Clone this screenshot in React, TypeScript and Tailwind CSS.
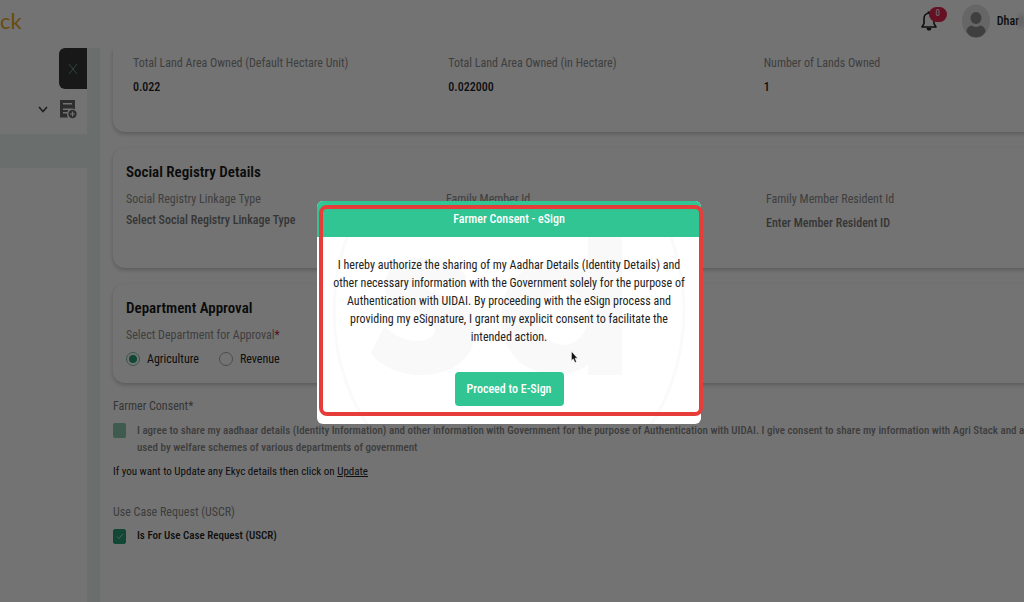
import { useState } from "react";

type FieldProps = {
  id: string;
  label: string;
  placeholder: string;
};

const landDetails = [
  { label: "Total Land Area Owned (Default Hectare Unit)", value: "0.022" },
  { label: "Total Land Area Owned (in Hectare)", value: "0.022000" },
  { label: "Number of Lands Owned", value: "1" },
];

const Header = () => (
  <header className="flex h-12 shrink-0 items-center justify-between bg-white">
    <span className="pb-2 font-[Lato,sans-serif] text-[22px] text-[#e8a81c]">
      ck
    </span>
    <div className="flex items-center pb-[7px]">
      <button
        type="button"
        aria-label="Notifications"
        className="relative mr-6 text-[#222]"
      >
        <svg width="18" height="22" viewBox="0 0 18 22" fill="none">
          <path
            d="M9 3.2C5.8 3.2 4 5.6 4 8.6V13.6L2 17H16L14 13.6V8.6C14 5.6 12.2 3.2 9 3.2Z"
            stroke="currentColor"
            strokeWidth="1.6"
            strokeLinejoin="round"
          />
          <path d="M7.6 3V1.4H10.4V3Z" fill="currentColor" />
          <path d="M6.6 18H11.4C11.4 19.6 10.4 20.6 9 20.6S6.6 19.6 6.6 18Z" fill="currentColor" />
        </svg>
        <span className="absolute -top-[3px] left-[9px] flex h-[15px] w-[18px] items-center justify-center rounded-full bg-[#e0264f] text-[9px] text-white">
          0
        </span>
      </button>
      <svg width="28" height="34" viewBox="0 0 28 34" className="mr-[7px]">
        <ellipse cx="14" cy="17" rx="14" ry="16.5" fill="#e2e2e2" />
        <ellipse cx="14" cy="14" rx="5.5" ry="6" fill="#8c8c8c" />
        <path
          d="M4.5 27.5C4.5 24 7.5 22 9.5 21.6C12 23.4 16 23.4 18.5 21.6C20.5 22 23.5 24 23.5 27.5C21.5 32 17.5 33.4 14 33.4S6.5 32 4.5 27.5Z"
          fill="#8c8c8c"
        />
      </svg>
      <span className="text-xs font-medium text-[#1a1a1a]">Dhar</span>
      <span className="h-3 w-[5px] bg-[#d4d4d4] blur-[2px]" />
    </div>
  </header>
);

const Sidebar = () => (
  <aside className="flex w-[87px] shrink-0 flex-col">
    <div className="h-[86px] bg-white">
      <button
        type="button"
        aria-label="Close menu"
        className="ml-auto flex h-[41px] w-7 items-center justify-center rounded-l-md bg-[#363636] text-[#5f9f8e]"
      >
        <svg width="10" height="12" viewBox="0 0 10 12" stroke="currentColor">
          <path d="M1 1L9 11M9 1L1 11" />
        </svg>
      </button>
      <div className="mt-[10px] flex items-center justify-end gap-[11px] pr-[10px] text-[#444]">
        <svg width="10" height="7" viewBox="0 0 10 7" fill="none">
          <path d="M1 1L5 5.5L9 1" stroke="currentColor" strokeWidth="1.6" />
        </svg>
        <svg width="18" height="20" viewBox="0 0 18 20" fill="#666">
          <path
            fillRule="evenodd"
            d="M1 1H16V10.2A5.5 5.5 0 0 0 13 9.4H4V11H9.5A5 5 0 0 0 8.4 13H4V14.6H8A6 6 0 0 0 9 18.5H1ZM4 4V5.6H13V4Z"
          />
          <path
            fillRule="evenodd"
            d="M13.5 10.8A4.2 4.2 0 1 1 13.5 19.2A4.2 4.2 0 1 1 13.5 10.8ZM12.9 12.6V14.4H11.1V15.6H12.9V17.4H14.1V15.6H15.9V14.4H14.1V12.6Z"
          />
        </svg>
      </div>
    </div>
    <div className="h-[34px] bg-[#ecf3f1]" />
    <div className="grow bg-white" />
  </aside>
);

const Field = ({ id, label, placeholder }: FieldProps) => (
  <div>
    <label htmlFor={id} className="block text-[#8c8c8c]">
      {label}
    </label>
    <input
      id={id}
      placeholder={placeholder}
      className="mt-2 block h-4 w-[220px] bg-transparent font-medium placeholder:text-[#777] placeholder:opacity-100 focus:outline-none"
    />
  </div>
);

const CheckMark = () => (
  <svg
    width="8"
    height="7"
    viewBox="0 0 8 7"
    fill="none"
    className="pointer-events-none col-start-1 row-start-1"
  >
    <path d="M1 3.5L3 5.5L7 1" stroke="#a5dcc8" />
  </svg>
);

const RegistrationForm = () => {
  const [department, setDepartment] = useState("Agriculture");
  const [useCase, setUseCase] = useState(true);

  return (
    <main className="min-w-0 grow overflow-hidden bg-white pl-[13px] text-xs leading-4">
      <div className="min-w-[986px]">
        {/* Land details */}
        <section className="grid h-[84px] grid-cols-3 rounded-b-xl px-5 pt-[7px] shadow-[0_2px_4px_rgba(0,0,0,0.22)]">
          {landDetails.map(({ label, value }) => (
            <div key={label}>
              <p className="text-[#8c8c8c]">{label}</p>
              <p className="mt-2 font-medium text-[#222]">{value}</p>
            </div>
          ))}
        </section>

        {/* Social registry */}
        <section className="mt-4 h-[120px] rounded-xl px-[13px] pt-[14px] shadow-[0_2px_4px_rgba(0,0,0,0.22)]">
          <h2 className="text-[15px] leading-5 font-semibold text-[#1a1a1a]">
            Social Registry Details
          </h2>
          <div className="mt-[9px] grid grid-cols-3">
            <div>
              <label htmlFor="linkage-type" className="block text-[#8c8c8c]">
                Social Registry Linkage Type
              </label>
              <select
                id="linkage-type"
                className="mt-[5px] block h-4 appearance-none bg-transparent font-medium text-[#777]"
              >
                <option>Select Social Registry Linkage Type</option>
              </select>
            </div>
            <Field id="member-id" label="Family Member Id" placeholder="" />
            <Field
              id="resident-id"
              label="Family Member Resident Id"
              placeholder="Enter Member Resident ID"
            />
          </div>
        </section>

        {/* Department approval */}
        <section className="mt-4 h-[99px] rounded-xl px-[13px] pt-[14px] shadow-[0_2px_4px_rgba(0,0,0,0.22)]">
          <h2 className="text-[15px] leading-5 font-semibold text-[#1a1a1a]">
            Department Approval
          </h2>
          <fieldset className="mt-[9px]">
            <legend className="text-[#8c8c8c]">
              Select Department for Approval
              <span className="text-[#c0203c]">*</span>
            </legend>
            <div className="mt-2 flex gap-5">
              {["Agriculture", "Revenue"].map((name) => (
                <label key={name} className="flex items-center gap-[7px] text-[#222]">
                  <input
                    type="radio"
                    name="department"
                    checked={department === name}
                    onChange={() => setDepartment(name)}
                    className="size-[14px] appearance-none rounded-full border border-[#aaa] bg-clip-content p-[2px] checked:border-[#7cc0a5] checked:bg-[#2a9d75]"
                  />
                  {name}
                </label>
              ))}
            </div>
          </fieldset>
        </section>

        {/* Consent */}
        <p className="mt-[15px] text-[#777]">Farmer Consent*</p>
        <label className="mt-2 flex gap-[11px] text-[11px] leading-[17px] font-medium text-[#888]">
          <input
            type="checkbox"
            disabled
            className="mt-[1px] h-[15px] w-[13px] shrink-0 appearance-none rounded-xs bg-[#8cc9b1]"
          />
          <span>
            I agree to share my aadhaar details (Identity Information) and other
            information with Government for the purpose of Authentication with
            UIDAI. I give consent to share my information with Agri Stack and a
            <br />
            used by welfare schemes of various departments of government
          </span>
        </label>
        <p className="mt-2 text-[11px] leading-4 text-[#222]">
          If you want to Update any Ekyc details then click on{" "}
          <a href="#update" className="underline">
            Update
          </a>
        </p>

        <p className="mt-6 text-[#888]">Use Case Request (USCR)</p>
        <label className="mt-2 flex items-center gap-[11px] pb-6 text-[11px] leading-4 font-medium text-[#222]">
          <span className="grid place-items-center">
            <input
              type="checkbox"
              checked={useCase}
              onChange={(e) => setUseCase(e.target.checked)}
              className="col-start-1 row-start-1 h-[15px] w-[13px] appearance-none rounded-xs border border-[#2a9d75] checked:bg-[#2a9d75]"
            />
            {useCase && <CheckMark />}
          </span>
          Is For Use Case Request (USCR)
        </label>
      </div>
    </main>
  );
};

const Watermark = () => (
  <svg
    viewBox="0 0 384 187"
    fill="none"
    aria-hidden="true"
    className="absolute inset-0 size-full"
  >
    <ellipse cx="192" cy="74" rx="175" ry="194" stroke="#fafafa" strokeWidth="3" />
    <path
      d="M150 40C130 14 72 14 68 46C66 84 118 66 118 92C116 112 76 104 68 88L54 116C78 150 158 146 158 94C156 48 110 66 110 48C116 38 130 44 138 54Z"
      fill="#f9f9f9"
    />
    <path
      fillRule="evenodd"
      d="M271 0H305V138H271V128C244 148 184 138 184 80C184 30 236 10 271 34ZM271 80A25 28 0 1 0 221 80A25 28 0 1 0 271 80Z"
      fill="#f9f9f9"
    />
  </svg>
);

const ConsentDialog = () => (
  <div className="fixed inset-0 flex items-center justify-center bg-black/55 pt-[23px] pr-[6px]">
    <div
      role="dialog"
      aria-labelledby="consent-title"
      className="relative w-96 rounded-md bg-white"
    >
      <h2
        id="consent-title"
        className="h-9 rounded-t-md bg-[#30c592] pt-[10px] text-center text-xs leading-4 font-medium text-white"
      >
        Farmer Consent - eSign
      </h2>
      <div className="relative px-4 pt-[19px] pb-[18px] text-center">
        <Watermark />
        <p className="relative text-xs leading-[18px] text-[#222]">
          I hereby authorize the sharing of my Aadhar Details (Identity Details)
          and other necessary information with the Government solely for the
          purpose of Authentication with UIDAI. By proceeding with the eSign
          process and providing my eSignature, I grant my explicit consent to
          facilitate the intended action.
        </p>
        <button
          type="button"
          className="relative mt-[26px] block h-[34px] w-[109px] justify-self-center rounded-sm bg-[#30c592] text-xs font-medium text-white"
        >
          Proceed to E-Sign
        </button>
      </div>
      {/* Highlight frame around the consent text */}
      <div className="pointer-events-none absolute top-1 -right-[2px] bottom-2 left-[2px] rounded-lg border-4 border-[#e63c3a]" />
      <svg
        width="7"
        height="12"
        viewBox="0 0 7 12"
        className="pointer-events-none absolute top-[150px] left-[254px]"
      >
        <path
          d="M0.5 0.5V9.5L2.3 7.8L4 11.5L5.4 10.8L3.9 7.2H6.5Z"
          fill="#111"
          stroke="#fff"
          strokeWidth="0.4"
        />
      </svg>
    </div>
  </div>
);

const App = () => (
  <div className="flex min-h-screen flex-col overflow-hidden bg-white font-['Roboto_Condensed',Roboto,sans-serif]">
    <Header />
    <div className="flex grow">
      <Sidebar />
      <div className="w-[13px] shrink-0 bg-[#ecf3f1]" />
      <RegistrationForm />
    </div>
    <ConsentDialog />
  </div>
);

export default App;
